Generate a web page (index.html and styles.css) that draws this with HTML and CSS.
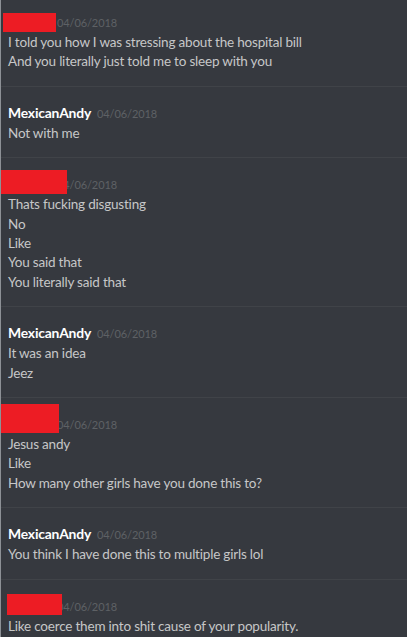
FILE: index.html
```html
<!DOCTYPE html>
<html>
<head>
<meta charset="utf-8">
<link rel="stylesheet" href="styles.css">
</head>
<body>
<div class="chat">
  <div class="group first">
    <div class="header">
      <span class="name hidden w1">Redacted</span><span class="time">04/06/2018</span>
      <span class="redact r1"></span>
    </div>
    <div class="line">I told you how I was stressing about the hospital bill</div>
    <div class="line">And you literally just told me to sleep with you</div>
  </div>
  <div class="group">
    <div class="header"><span class="name">MexicanAndy</span><span class="time">04/06/2018</span></div>
    <div class="line">Not with me</div>
  </div>
  <div class="group">
    <div class="header">
      <span class="name hidden w1">Redacted</span><span class="time">04/06/2018</span>
      <span class="redact r2"></span>
    </div>
    <div class="line">Thats fucking disgusting</div>
    <div class="line">No</div>
    <div class="line">Like</div>
    <div class="line">You said that</div>
    <div class="line">You literally said that</div>
  </div>
  <div class="group">
    <div class="header"><span class="name">MexicanAndy</span><span class="time">04/06/2018</span></div>
    <div class="line">It was an idea</div>
    <div class="line">Jeez</div>
  </div>
  <div class="group">
    <div class="header">
      <span class="name hidden w1">Redacted</span><span class="time">04/06/2018</span>
      <span class="redact r3"></span>
    </div>
    <div class="line">Jesus andy</div>
    <div class="line">Like</div>
    <div class="line">How many other girls have you done this to?</div>
  </div>
  <div class="group">
    <div class="header"><span class="name">MexicanAndy</span><span class="time">04/06/2018</span></div>
    <div class="line">You think I have done this to multiple girls lol</div>
  </div>
  <div class="group">
    <div class="header">
      <span class="name hidden w1">Redacted</span><span class="time">04/06/2018</span>
      <span class="redact r4"></span>
    </div>
    <div class="line">Like coerce them into shit cause of your popularity.</div>
  </div>
</div>
</body>
</html>
```

FILE: styles.css
```css
html, body {
  margin: 0;
  padding: 0;
  background: #36393f;
  height: 100%;
  overflow: hidden;
}
.chat {
  border-left: 1px solid #8d9196;
  min-height: 100%;
  font-family: "Lato", "Open Sans", sans-serif;
  font-size: 13.5px;
  letter-spacing: -0.2px;
  color: #c6c7c8;
}
.group {
  padding: 16px 0 15px 7px;
  border-bottom: 1px solid #404348;
}
.group.first {
  padding-top: 12px;
}
.header {
  position: relative;
  height: 21px;
  line-height: 20px;
  display: flex;
  align-items: baseline;
}
.name {
  color: #ffffff;
  font-weight: 700;
  font-size: 13.9px;
  margin-right: 6px;
}
.name.hidden {
  visibility: hidden;
  overflow: hidden;
  white-space: nowrap;
}
.w1 { width: 43px; }
.time {
  color: #5e6165;
  font-size: 11px;
  letter-spacing: -0.1px;
}
.line {
  line-height: 19.4px;
  white-space: nowrap;
}
.group .line:last-child {
  margin-bottom: -1px;
}
.redact {
  position: absolute;
  background: #ed1c24;
}
.r1 { left: -5px; top: 1px; width: 53px; height: 19px; }
.r2 { left: -7px; top: -4px; width: 66px; height: 24px; }
.r3 { left: -7px; top: -10px; width: 58px; height: 29px; }
.r4 { left: -1px; top: -2px; width: 55px; height: 21px; }
```
